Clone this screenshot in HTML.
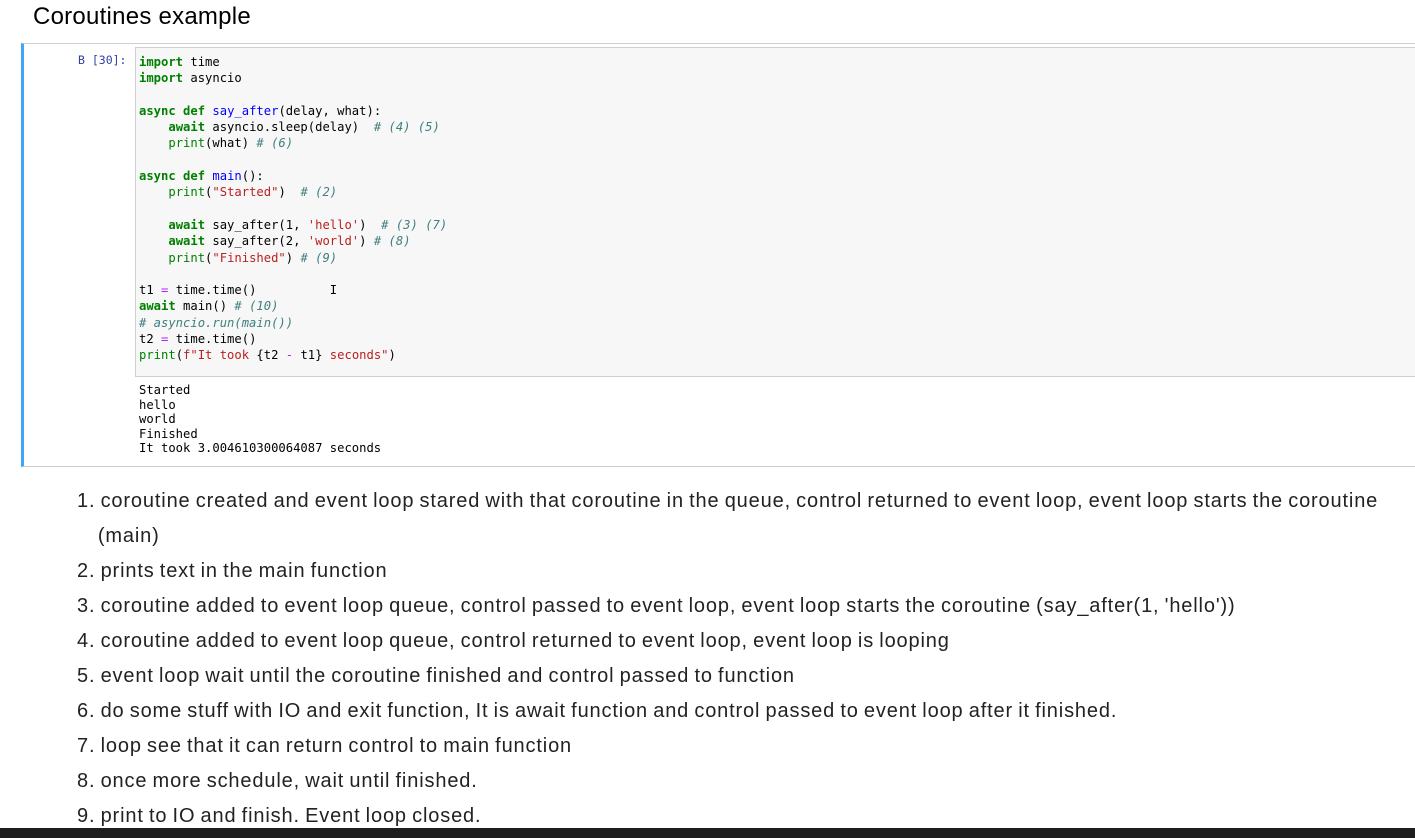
<!DOCTYPE html>
<html><head><meta charset="utf-8"><style>
body{margin:0;width:1415px;height:838px;overflow:hidden;background:#fff;position:relative;font-family:"Liberation Sans",sans-serif}
h1{position:absolute;left:33px;top:3px;margin:0;font-size:24px;font-weight:normal;color:#000;letter-spacing:0.25px}
.cell{position:absolute;left:21px;top:43px;width:1394px;height:424px;border-top:1px solid #cfcfcf;border-bottom:1px solid #cfcfcf;border-left:3px solid #42a5f5;box-sizing:border-box}
.prompt{position:absolute;left:54px;top:9px;font-family:"DejaVu Sans Mono",monospace;font-size:11.5px;color:#303f9f}
.code{position:absolute;left:111px;top:3px;width:1290px;height:330px;background:#f7f7f7;border:1px solid #cfcfcf;box-sizing:border-box}
pre{margin:0;font-family:"DejaVu Sans Mono",monospace;font-size:12.2px;line-height:16.3px;color:#000}
.code pre{position:absolute;left:3px;top:6px}
.out{position:absolute;left:115px;top:339px;}
.out pre{line-height:14.6px;font-size:12.2px}
.k{color:#008000;font-weight:bold}.f{color:#0000ff}.c{color:#408080;font-style:italic}.s{color:#ba2121}.o{color:#aa22ff}.b{color:#008000}
ol{position:absolute;left:0;top:484px;margin:0;padding:0;list-style:none;font-size:20px;line-height:35px;color:#222;letter-spacing:0.85px;word-spacing:-1.2px}
li{white-space:nowrap;padding-left:77px}
.bar{position:absolute;left:0;top:828px;width:1415px;height:10px;background:#1e1e1e}
</style></head><body>
<h1>Coroutines example</h1>
<div class="cell">
<div class="prompt">В [30]:</div>
<div class="code"><pre><span class="k">import</span> time
<span class="k">import</span> asyncio

<span class="k">async</span> <span class="k">def</span> <span class="f">say_after</span>(delay, what):
    <span class="k">await</span> asyncio.sleep(delay)  <span class="c"># (4) (5)</span>
    <span class="b">print</span>(what) <span class="c"># (6)</span>

<span class="k">async</span> <span class="k">def</span> <span class="f">main</span>():
    <span class="b">print</span>(<span class="s">"Started"</span>)  <span class="c"># (2)</span>

    <span class="k">await</span> say_after(1, <span class="s">'hello'</span>)  <span class="c"># (3) (7)</span>
    <span class="k">await</span> say_after(2, <span class="s">'world'</span>) <span class="c"># (8)</span>
    <span class="b">print</span>(<span class="s">"Finished"</span>) <span class="c"># (9)</span>

t1 <span class="o">=</span> time.time()          I
<span class="k">await</span> main() <span class="c"># (10)</span>
<span class="c"># asyncio.run(main())</span>
t2 <span class="o">=</span> time.time()
<span class="b">print</span>(<span class="s">f"It took </span>{t2 <span class="o">-</span> t1}<span class="s"> seconds"</span>)</pre></div>
<div class="out"><pre>Started
hello
world
Finished
It took 3.004610300064087 seconds</pre></div>
</div>
<ol>
<li>1. coroutine created and event loop stared with that coroutine in the queue, control returned to event loop, event loop starts the coroutine<br>&nbsp;&nbsp;&nbsp;&nbsp;(main)</li>
<li>2. prints text in the main function</li>
<li>3. coroutine added to event loop queue, control passed to event loop, event loop starts the coroutine (say_after(1, 'hello'))</li>
<li>4. coroutine added to event loop queue, control returned to event loop, event loop is looping</li>
<li>5. event loop wait until the coroutine finished and control passed to function</li>
<li>6. do some stuff with IO and exit function, It is await function and control passed to event loop after it finished.</li>
<li>7. loop see that it can return control to main function</li>
<li>8. once more schedule, wait until finished.</li>
<li>9. print to IO and finish. Event loop closed.</li>
</ol>
<div class="bar"></div>
</body></html>
